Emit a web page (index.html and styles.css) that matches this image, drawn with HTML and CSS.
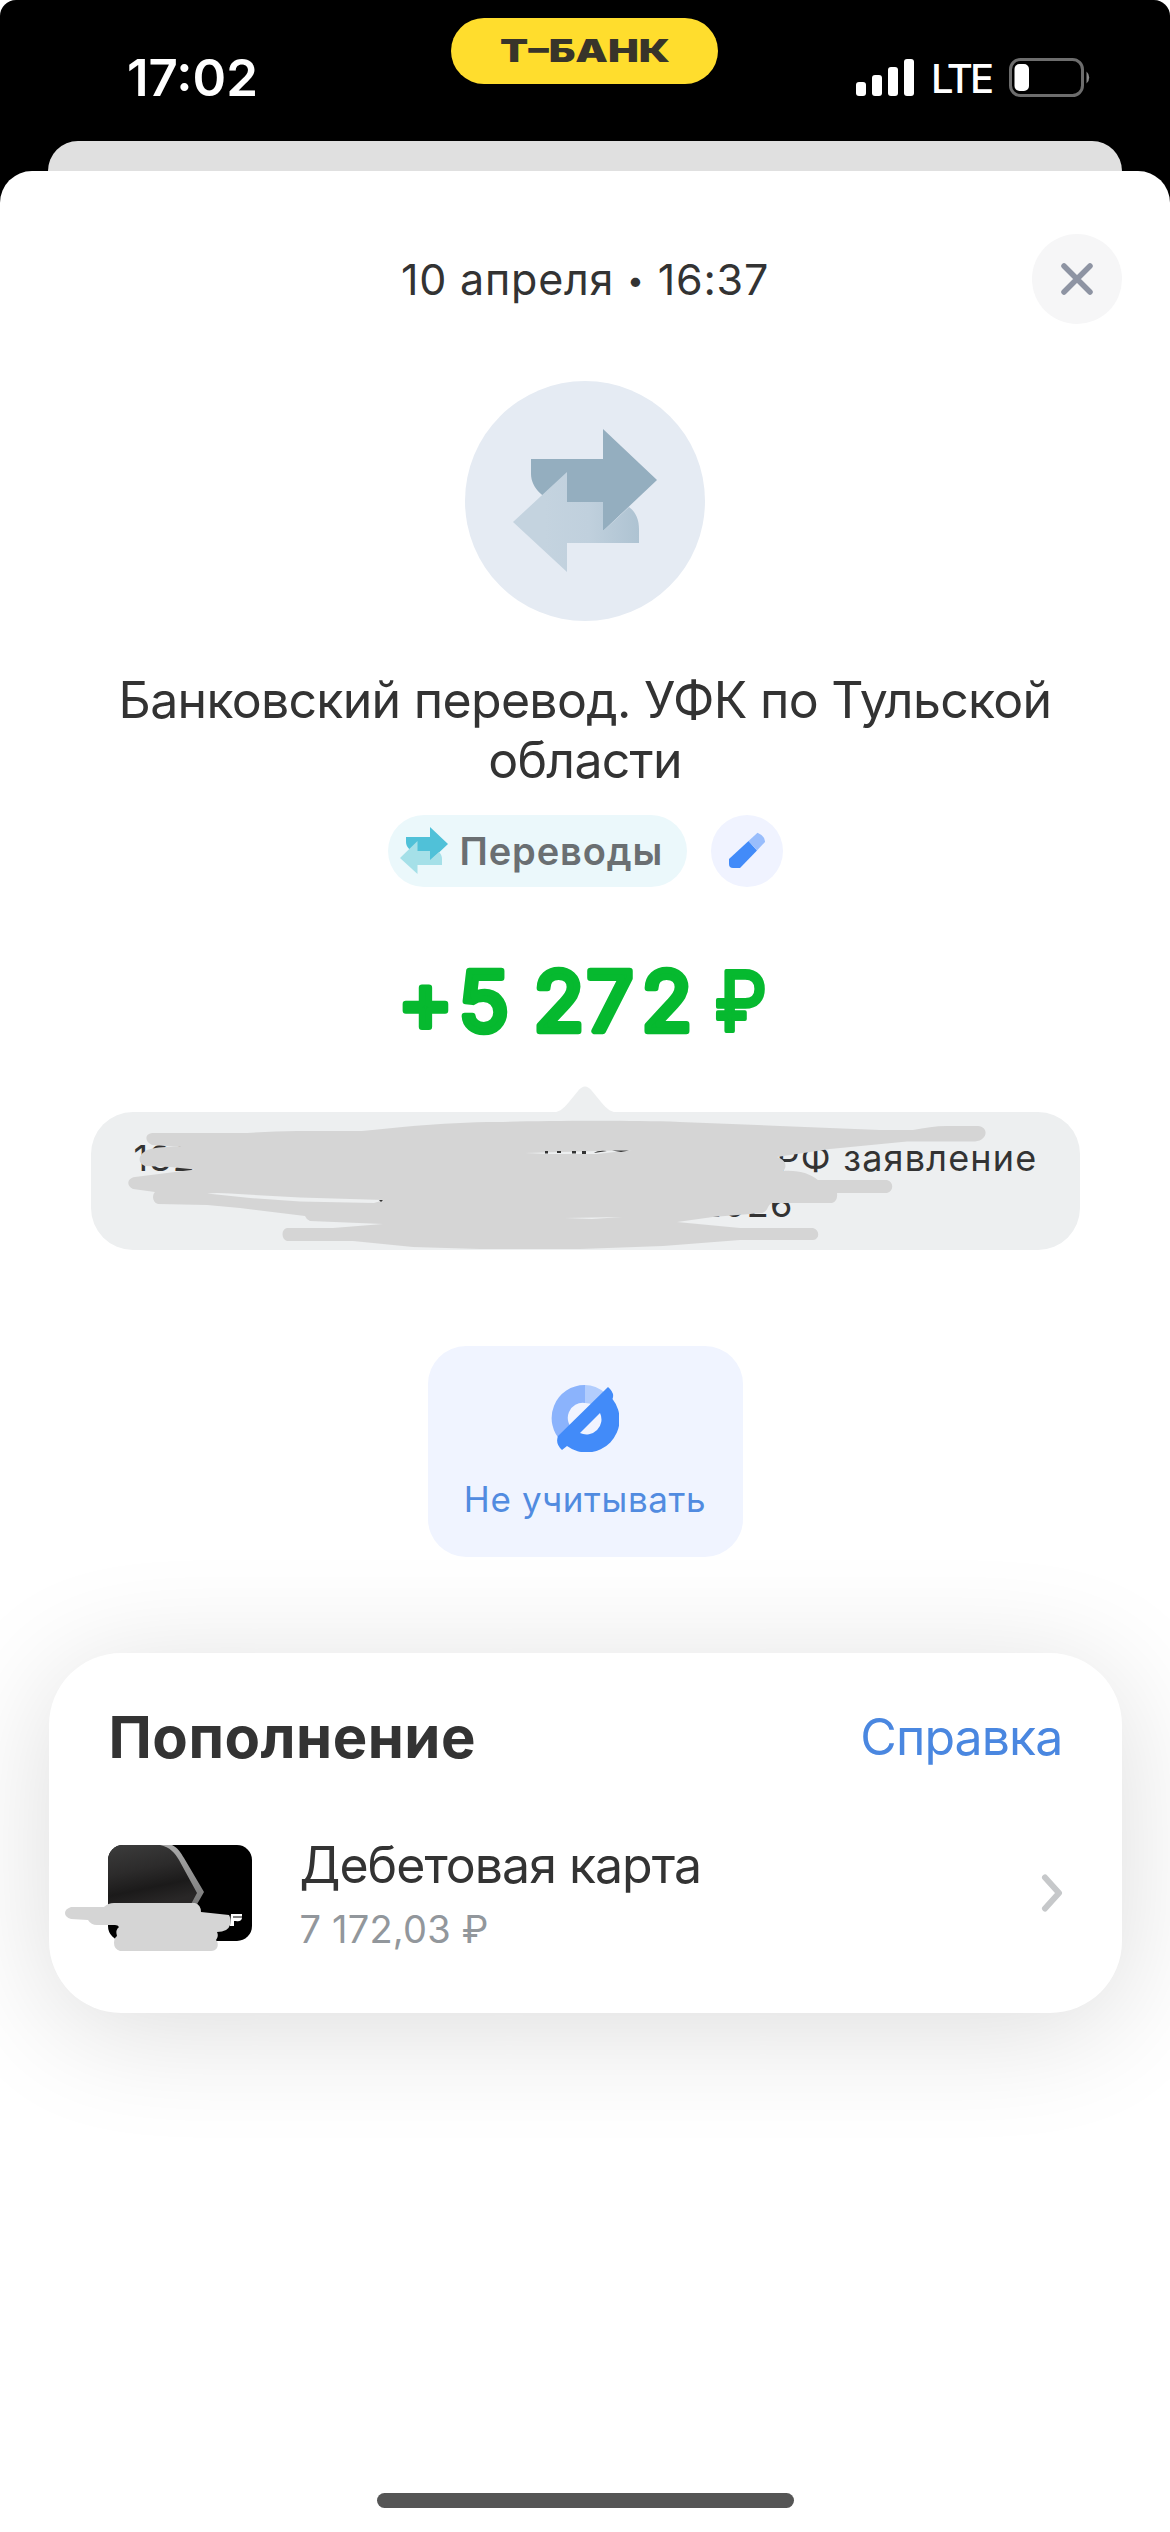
FILE: index.html
```html
<!DOCTYPE html>
<html lang="ru">
<head>
<meta charset="utf-8">
<title>Т-Банк — операция</title>
<link rel="stylesheet" href="styles.css">
</head>
<body>
<div class="phone">
  <header class="backdrop">
    <div class="statusbar">
      <span class="time">17:02</span>
      <div class="brand">
        <svg width="176" height="44" viewBox="-4 -6 176 44"><text class="brand-text" x="-1" y="27" textLength="170" lengthAdjust="spacingAndGlyphs">Т–БАНК</text></svg>
      </div>
      <div class="indicators">
        <svg width="58" height="38" viewBox="0 0 58 38" fill="#fff"><rect x="0" y="23" width="10" height="14" rx="3"/><rect x="16" y="16" width="10" height="21" rx="3"/><rect x="32" y="8" width="10" height="29" rx="3"/><rect x="48" y="0" width="10" height="37" rx="3"/></svg>
        <span class="network">LTE</span>
        <svg width="82" height="40" viewBox="0 0 82 40"><rect x="1.500" y="1.500" width="72" height="36" rx="10" fill="none" stroke="#6d6d6d" stroke-width="3"/><path d="M77.500 13.500a8 8 0 0 1 0 12z" fill="#8a8a8a"/><rect x="5.500" y="6" width="14.500" height="27" rx="5" fill="#fff"/></svg>
      </div>
    </div>
    <div class="under-sheet"></div>
  </header>

  <main class="sheet">
    <div class="sheet-header">
      <span class="date">10 апреля <span class="dot">•</span> 16:37</span>
      <button class="close" aria-label="Закрыть">
        <svg width="34" height="34" viewBox="0 0 34 34"><path d="M4 4l26 26M30 4L4 30" stroke="#8e94a3" stroke-width="5.500" stroke-linecap="round"/></svg>
      </button>
    </div>

    <div class="avatar">
      <svg width="240" height="240" viewBox="0 0 240 240">
        <defs><linearGradient id="back" x1="0" x2="1"><stop offset=".25" stop-color="#c4d3df"/><stop offset=".6" stop-color="#c0d0dd"/><stop offset="1" stop-color="#aec3d2"/></linearGradient></defs>
        <path d="M66 78h72V48l54 51-54 51v-29H98c-18 0-32-14-32-28z" fill="#94aebf"/>
        <path d="M48 141l54-50v30h36v29l26-24c7 5 10 13 10 22v14h-72v29z" fill="url(#back)"/>
      </svg>
    </div>

    <h1 class="title">Банковский перевод. УФК по Тульской<br>области</h1>

    <div class="tags">
      <div class="tag">
        <svg width="48" height="48" viewBox="0 0 48 48"><path d="M6 10h24V0l18 17-18 17v-10H16C10 24 6 20 6 15z" fill="#50c1d8"/><path d="M0 31l17.500-17v10H30v9l9-8c2 2 3 4 3 7v6H17.500v9z" fill="#a5e0e8"/></svg>
        <span class="tag-text">Переводы</span>
      </div>
      <button class="edit" aria-label="Изменить">
        <svg width="38" height="38" viewBox="0 0 38 38"><path d="M1 27L20.500 9l8.500 9.500L12 36H5q-4 0-4-4z" fill="#428bf9"/><path d="M20.500 9L29.500 .8q8 3.500 7.500 9.200L29 18.500z" fill="#99bdfc"/></svg>
      </button>
    </div>

    <div class="amount">
      <svg width="390" height="100" viewBox="390 951 390 100">
        <text class="amount-text" y="1031"><tspan x="398 458.500">+5</tspan> <tspan x="533.500 586.500 641.500">272</tspan> <tspan class="ruble" x="715" textLength="52" lengthAdjust="spacingAndGlyphs">₽</tspan></text>
      </svg>
    </div>

    <div class="message">
      <svg class="tip" width="72" height="28" viewBox="0 0 72 28"><path d="M0 28c10 0 14-4 20-11l9-11q7-9 14 0l9 11c6 7 10 11 20 11z" fill="#edeff0"/></svg>
      <div class="message-line"><span>132</span><span>РФ заявление</span></div>
      <div class="message-line second"><span>2026</span></div>
      <svg class="scribble" width="989" height="138" viewBox="91 1112 989 138">
        <path fill="#d5d5d5" d="M152 1133H247C265 1132 280 1131 297 1131H362C380 1129 395 1128 413 1126 440 1124 470 1122 497 1122 540 1121 620 1120 680 1122L780 1126 880 1130H913C925 1128 935 1126 947 1126H978C989 1127 988 1140 975 1141.500H907L830 1149 777 1157C787 1160 787 1168 783 1171 800 1170 810 1174 818 1180H887C894 1182 894 1191 887 1193H837Q838 1201 832 1203H772C767 1205 768 1212 762 1213L713 1217 677 1222 740 1228H813C820 1230 820 1239 813 1240H740L663 1246 580 1249H480L413 1247 353 1241H287C281 1239 281 1229 287 1228H333L383 1224 310 1221Q306 1219 305 1216L240 1208 207 1205 158 1204C152 1202 152 1195 155 1192L133 1189C126 1186 127 1178 135 1177L195 1169.500 170 1167 145 1166C137 1163 138 1155 147 1150Q160 1146 182 1147L152 1145C145 1142 144 1134 152 1133Z"/>
        <path fill="#edeff0" d="M207 1193.500Q217 1192 247 1194.500L300 1197.500 384 1200 374 1203 300 1201.500 250 1198ZM525 1153L597 1151 632 1150 597 1154H548ZM565 1218L622 1217 592 1219Z"/>
        <path fill="#333" d="M545 1151h3v2.500h-3zM557 1151h4v2h-4zM572 1151h4v2.500h-4zM582 1151h4v3h-4zM594 1153q4-3 13-2zM612 1150.500l17 0-8 1.500zM379 1200l4 0-2 2z"/>
      </svg>
    </div>

    <button class="exclude">
      <svg width="68" height="68" viewBox="0 0 68 68">
        <path d="M34 1A33 33 0 0 0 11 58L23 46A15 15 0 0 1 34 19z" fill="#8bb3fc"/>
        <path d="M34 1v18q4 0 9 2L54 9Q45 1 34 1z" fill="#b2cdfd"/>
        <path fill-rule="evenodd" d="M57 3Q64 9 61.500 15A33 33 0 0 1 16 62L11 66Q4 60 7 52zM49 29L29 49A15 15 0 0 0 49 29z" fill="#428bf9"/>
      </svg>
      <span class="exclude-text">Не учитывать</span>
    </button>

    <section class="card">
      <div class="card-head">
        <h2 class="card-title">Пополнение</h2>
        <a class="card-link">Справка</a>
      </div>
      <div class="account">
        <div class="thumb">
          <svg class="thumb-art" width="220" height="150" viewBox="50 1820 220 150">
            <defs><linearGradient id="dark" x1="0" y1="0" x2=".3" y2="1"><stop offset="0" stop-color="#3c3c3c"/><stop offset=".45" stop-color="#2c2b2b"/><stop offset=".75" stop-color="#1b1a1a"/><stop offset="1" stop-color="#292727"/></linearGradient>
            <linearGradient id="edge" x1="0" y1="0" x2="0" y2="1"><stop offset="0" stop-color="#aaa"/><stop offset="1" stop-color="#777"/></linearGradient>
            <clipPath id="plate"><rect x="108" y="1845" width="144" height="96" rx="15"/></clipPath></defs>
            <g clip-path="url(#plate)"><path d="M108 1845h144v96H108z"/><path d="M108 1845h55c10 3 14 9 18 16l17 32-8 15h-82z" fill="url(#dark)"/><path d="M160 1845h12c6 3 9 8 12 13l20 34-8 14h-6l7-13-18-33c-4-7-9-13-19-15z" fill="url(#edge)"/></g>
            <path d="M231 1914h11v4q-1 4-6 3h-2v5h-4z" fill="#fff"/><path d="M233 1917h10" stroke="#000"/>
            <path d="M71 1907h33q4-4 10-4h81q6 2 6 9l28 3q2 3 1 10-2 7-13 7 2 4-1 8 3 3 1 8-2 3-6 3h-91q-6-2-6-8 0-5 3-7-2-6 2-9-1-2-4-2H97q-6 0-9-5l-17-1q-6-2-6-6t6-6z" fill="#d5d5d5"/>
          </svg>
        </div>
        <div class="account-info">
          <span class="account-name">Дебетовая карта</span>
          <span class="account-sum">7 172,03 ₽</span>
        </div>
        <svg width="22" height="40" viewBox="0 0 22 40"><path d="M4 4.500L18 20 4 35.500" fill="none" stroke="#c6c8ca" stroke-width="6" stroke-linecap="round" stroke-linejoin="round"/></svg>
      </div>
    </section>
    <div class="home-indicator"></div>
  </main>
</div>
</body>
</html>
```
FILE: styles.css
```css
* { box-sizing: border-box; }
body {
  margin: 0;
  background: #fff;
  color: #333;
  font-family: Inter, "Noto Sans", sans-serif;
}
button {
  padding: 0;
  border: 0;
  font: inherit;
}
svg { display: block; flex: none; }

.phone {
  display: flex;
  flex-direction: column;
  width: 1170px;
  height: 2532px;
  overflow: hidden;
}
.backdrop {
  height: 210px;
  flex: none;
  background: #000;
  border-radius: 16px 16px 0 0;
}
.statusbar {
  display: grid;
  grid-template-columns: 451px 267px 1fr;
  align-items: start;
  height: 141px;
  color: #fff;
}
.time {
  justify-self: start;
  margin: 48px 0 0 127px;
  font-size: 51px;
  line-height: 60px;
  font-weight: 600;
}
.brand {
  display: flex;
  align-items: center;
  justify-content: center;
  height: 66px;
  margin-top: 18px;
  border-radius: 33px;
  background: #ffdd2d;
}
.brand-text {
  font-size: 32px;
  font-weight: 900;
  fill: #38342a;
}
.indicators {
  display: flex;
  align-items: center;
  margin: 58px 0 0 138px;
  height: 40px;
}
.network {
  width: 60px;
  margin: 2px 18px 0 17px;
  font-size: 40px;
  line-height: 40px;
  font-weight: 500;
  letter-spacing: -3px;
}
.under-sheet {
  height: 69px;
  margin: 0 48px;
  border-radius: 30px 30px 0 0;
  background: #e0e0e0;
}

.sheet {
  display: flex;
  flex-direction: column;
  align-items: center;
  flex: 1;
  margin-top: -39px;
  padding-top: 63px;
  border-radius: 32px 32px 0 0;
  background: #fff;
}
.sheet-header {
  display: grid;
  grid-template-columns: 90px 1fr 90px;
  align-items: center;
  justify-items: center;
  width: 100%;
  height: 90px;
  padding: 0 48px;
}
.date {
  grid-column: 2;
  font-size: 43px;
  line-height: 60px;
  letter-spacing: .8px;
}
.dot {
  font-size: 30px;
  line-height: 1;
  vertical-align: 4px;
}
.close {
  display: grid;
  place-items: center;
  width: 90px;
  height: 90px;
  border-radius: 50%;
  background: #f6f6f7;
}
.avatar {
  margin-top: 57px;
  border-radius: 50%;
  background: #e5ebf3;
}
.title {
  margin: 49px 0 0;
  font-size: 50px;
  line-height: 60px;
  font-weight: 400;
  letter-spacing: -.7px;
  text-align: center;
  white-space: nowrap;
}
.tags {
  display: flex;
  gap: 24px;
  margin-top: 25px;
}
.tag {
  display: flex;
  align-items: center;
  width: 299px;
  height: 72px;
  padding-left: 12px;
  border-radius: 36px;
  background: #ebf8fb;
}
.tag-text {
  margin-left: 12px;
  font-size: 38px;
  font-weight: 600;
  letter-spacing: .9px;
  color: #6a6f72;
}
.edit {
  display: grid;
  place-items: center;
  width: 72px;
  height: 72px;
  border-radius: 50%;
  background: #f0f3ff;
}
.amount { margin-top: 64px; }
.amount-text {
  font-size: 83px;
  font-weight: 400;
  fill: #06b92f;
  stroke: #06b92f;
  stroke-width: 6.5px;
  stroke-linejoin: round;
}
.ruble { stroke-width: 4px; }
.message {
  position: relative;
  width: 989px;
  height: 138px;
  margin-top: 61px;
  padding: 23px 42px 23px 43px;
  border-radius: 42px;
  background: #edeff0;
  font-size: 36px;
  line-height: 46px;
  letter-spacing: 1.2px;
}
.tip {
  position: absolute;
  left: 458px;
  top: -27px;
}
.message-line {
  display: flex;
  justify-content: space-between;
}
.second {
  justify-content: flex-end;
  padding-right: 244px;
}
.scribble {
  position: absolute;
  left: 0;
  top: 0;
}
.exclude {
  display: flex;
  flex-direction: column;
  align-items: center;
  width: 315px;
  height: 211px;
  margin-top: 96px;
  padding-top: 38px;
  border-radius: 38px;
  background: #f0f4ff;
}
.exclude-text {
  margin-top: 27px;
  font-size: 35px;
  line-height: 40px;
  letter-spacing: .6px;
  color: #518be0;
}
.card {
  width: 1073px;
  height: 360px;
  margin-top: 96px;
  padding: 54px 59px 0 59px;
  border-radius: 72px;
  background: #fff;
  box-shadow: 0 16px 120px rgba(0, 0, 0, .14);
}
.card-head {
  display: flex;
  align-items: center;
  justify-content: space-between;
  height: 60px;
}
.card-title {
  margin: 0 0 0 1px;
  font-size: 58px;
  line-height: 60px;
  font-weight: 700;
  letter-spacing: .5px;
}
.card-link {
  font-size: 50px;
  letter-spacing: -.9px;
  color: #4a87e0;
}
.account {
  display: flex;
  align-items: center;
  height: 96px;
  margin-top: 78px;
}
.thumb {
  position: relative;
  width: 144px;
  height: 96px;
}
.thumb-art {
  position: absolute;
  left: -58px;
  top: -25px;
}
.account-info {
  display: flex;
  flex-direction: column;
  align-items: flex-start;
  flex: 1;
  margin-left: 48px;
}
.account-name {
  font-size: 50px;
  line-height: 60px;
  letter-spacing: -1px;
}
.account-sum {
  margin-top: 11px;
  font-size: 38px;
  line-height: 46px;
  letter-spacing: .2px;
  color: #92979c;
}
.home-indicator {
  width: 417px;
  height: 15px;
  margin: auto 0 24px;
  border-radius: 8px;
  background: #555;
}
```
